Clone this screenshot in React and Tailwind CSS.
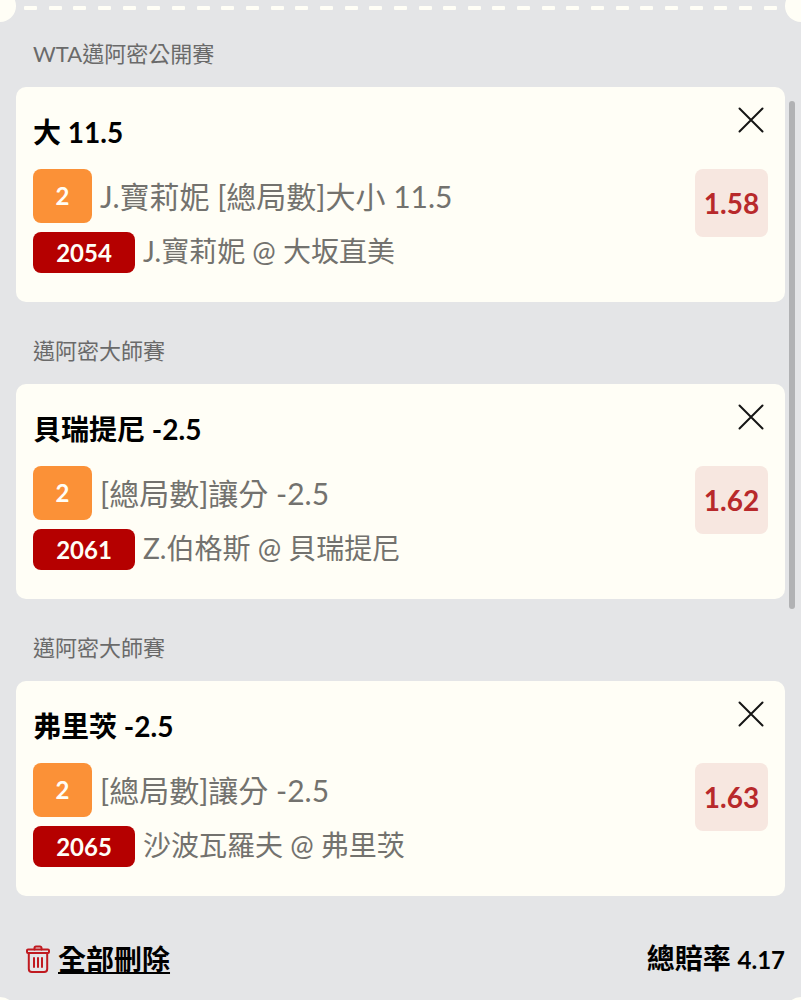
const bets = [
  {
    id: 1,
    league: 'WTA邁阿密公開賽',
    pick: '大 11.5',
    group: '2',
    market: 'J.寶莉妮 [總局數]大小 11.5',
    code: '2054',
    match: 'J.寶莉妮 @ 大坂直美',
    odds: '1.58',
  },
  {
    id: 2,
    league: '邁阿密大師賽',
    pick: '貝瑞提尼 -2.5',
    group: '2',
    market: '[總局數]讓分 -2.5',
    code: '2061',
    match: 'Z.伯格斯 @ 貝瑞提尼',
    odds: '1.62',
  },
  {
    id: 3,
    league: '邁阿密大師賽',
    pick: '弗里茨 -2.5',
    group: '2',
    market: '[總局數]讓分 -2.5',
    code: '2065',
    match: '沙波瓦羅夫 @ 弗里茨',
    odds: '1.63',
  },
];

function App() {
  return (
    <main
      lang="zh-Hant"
      className="relative min-h-screen overflow-hidden bg-[#e4e5e7] font-['Lato','Noto_Sans_CJK_TC',sans-serif] text-black"
    >
      <TicketDivider />

      <div className="px-4">
        {bets.map((bet) => (
          <BetItem key={bet.id} bet={bet} />
        ))}
      </div>

      <SlipFooter total="4.17" />

      {/* scroll thumb */}
      <div className="absolute top-[101px] right-[6px] h-[508px] w-[6px] rounded-full bg-[#b1b2b4]" />

      {/* bottom notches */}
      <div className="absolute -bottom-[29px] -left-4 size-8 rounded-full bg-[#fffef6]" />
      <div className="absolute -right-4 -bottom-[29px] size-8 rounded-full bg-[#fffef6]" />
    </main>
  );
}

// Perforated line with a round notch on both sides
function TicketDivider() {
  return (
    <div className="relative flex items-start justify-between px-6 pt-[6px]">
      <div className="absolute -top-[10px] -left-4 size-8 rounded-full bg-[#fffef6]" />
      {Array.from({ length: 31 }, (_, i) => (
        <span key={i} className="h-1 w-[13px] shrink-0 rounded-[1px] bg-[#fffef6]" />
      ))}
      <div className="absolute -top-[10px] -right-4 size-8 rounded-full bg-[#fffef6]" />
    </div>
  );
}

function BetItem({ bet }) {
  return (
    <section className="group">
      <h2 className="px-[17px] pt-[33px] pb-[17px] text-[22px] leading-8 text-[#6a6a6a] group-first:pt-7">
        {bet.league}
      </h2>

      <article className="rounded-[10px] bg-[#fffef6] px-[17px] pb-[29px]">
        <div className="flex h-[82px] items-start justify-between">
          <h3 className="pt-[25px] text-[28px] leading-10 font-bold">{bet.pick}</h3>
          <button type="button" aria-label="刪除" className="mt-4 flex size-[34px] items-center justify-center">
            <svg viewBox="0 0 26 26" className="size-[26px]" fill="none" stroke="#151515" strokeWidth="2" strokeLinecap="round">
              <path d="M1.5 1.5 24.5 24.5M24.5 1.5 1.5 24.5" />
            </svg>
          </button>
        </div>

        <div className="flex items-start justify-between">
          <div className="flex flex-col gap-[9px]">
            <div className="flex h-[54px] items-center gap-2">
              <span className="flex h-full w-[59px] items-center justify-center rounded-lg bg-[#fb9137] text-[24px] font-bold text-[#fffef6]">
                {bet.group}
              </span>
              <p className="text-[30px] leading-10 text-[#73726e]">{bet.market}</p>
            </div>
            <div className="flex h-[41px] items-start gap-2">
              <span className="flex h-full w-[102px] items-center justify-center rounded-lg bg-[#b50000] text-[24px] font-bold text-[#fffef6]">
                {bet.code}
              </span>
              <p className="text-[28px] leading-[38px] text-[#73726e]">{bet.match}</p>
            </div>
          </div>
          <span className="flex h-[68px] w-[73px] items-center justify-center rounded-lg bg-[#f7e7e0] text-[28px] font-bold text-[#b8292b]">
            {bet.odds}
          </span>
        </div>
      </article>
    </section>
  );
}

function SlipFooter({ total }) {
  return (
    <footer className="flex items-center justify-between px-4 pt-[42px] pb-5">
      <button type="button" className="flex items-center gap-2 pl-[10px] text-[28px] leading-10 font-bold">
        <TrashIcon />
        <span className="underline decoration-2 underline-offset-2">全部刪除</span>
      </button>
      <p className="text-[28px] leading-10 font-bold">
        總賠率 <span className="text-[24px]">{total}</span>
      </p>
    </footer>
  );
}

function TrashIcon() {
  return (
    <svg viewBox="0 0 24 28" className="h-7 w-6" fill="none" stroke="#c01a20" strokeWidth="2" strokeLinecap="round" strokeLinejoin="round">
      <path d="M2 4.5h20a1 1 0 0 1 1 1V7a1 1 0 0 1-1 1H2a1 1 0 0 1-1-1V5.500a1 1 0 0 1 1-1z" />
      <path d="M8.5 4.500V3a1.500 1.500 0 0 1 1.500-1.500h4a1.500 1.500 0 0 1 1.500 1.500v1.500" />
      <path d="M2.800 8v16a3 3 0 0 0 3 3h12.400a3 3 0 0 0 3-3V8" />
      <path strokeWidth="2" d="M8 13v9M12 13v9M16 13v9" />
    </svg>
  );
}

export default App;
